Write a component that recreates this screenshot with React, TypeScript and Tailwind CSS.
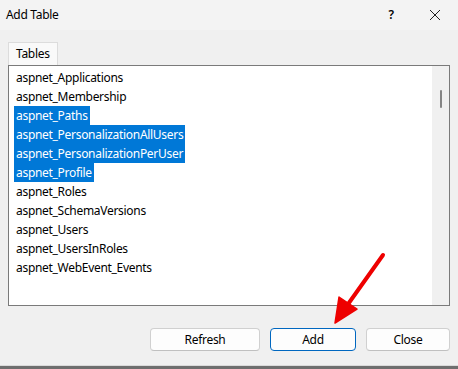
const tables = [
  "aspnet_Applications",
  "aspnet_Membership",
  "aspnet_Paths",
  "aspnet_PersonalizationAllUsers",
  "aspnet_PersonalizationPerUser",
  "aspnet_Profile",
  "aspnet_Roles",
  "aspnet_SchemaVersions",
  "aspnet_Users",
  "aspnet_UsersInRoles",
  "aspnet_WebEvent_Events",
];

const selected = new Set(["aspnet_Paths", "aspnet_PersonalizationAllUsers", "aspnet_PersonalizationPerUser", "aspnet_Profile"]);

export default function App() {
  return (
    <div
      className="relative w-[458px] h-[369px] overflow-hidden bg-[#f0f0f0] text-[#000] text-[12px] tracking-[-0.3px]"
      style={{ fontFamily: '"Segoe UI", "Noto Sans", "Open Sans", sans-serif' }}
    >
      {/* title bar */}
      <div className="h-[30px] flex items-center justify-between bg-[#f3f3f3] pl-[6px]">
        <span className="text-[12px] leading-none">Add Table</span>
        <div className="flex items-center h-full">
          <span className="w-[46px] pl-[4px] text-center text-[12px] font-semibold leading-none">?</span>
          <span className="w-[46px] flex justify-center">
            <svg width="12" height="12" viewBox="0 0 12 12" fill="none" stroke="#222" strokeWidth="1">
              <path d="M1 1L11 11M11 1L1 11" />
            </svg>
          </span>
        </div>
      </div>

      <div className="px-[8px] pt-[12px]">
        {/* tab */}
        <div className="w-[50px] h-[23px] flex items-center pl-[7px] bg-[#f9f9f9] border border-b-0 border-[#dcdcdc]">
          Tables
        </div>

        {/* list */}
        <div className="flex w-[442px] h-[241px] bg-white border border-[#7a7a7a]">
          <div className="flex-1 pt-[2px] pl-[5px]">
            {tables.map((t) => (
              <div key={t} className="h-[19px] flex">
                <span
                  className={
                    selected.has(t)
                      ? "px-[2px] h-full flex items-center bg-[#0078d7] text-white"
                      : "px-[2px] h-full flex items-center"
                  }
                >
                  {t}
                </span>
              </div>
            ))}
          </div>
          <div className="w-[17px] h-full bg-[#f0f0f0] flex justify-center pt-[24px]">
            <div className="w-[2px] h-[18px] bg-[#858585] rounded-full" />
          </div>
        </div>

        {/* buttons */}
        <div className="flex justify-end gap-[10px] mt-[22px]">
          <button className="w-[110px] h-[23px] bg-[#fdfdfd] border border-[#d0d0d0] border-b-[#c0c0c0] rounded-[4px]">
            Refresh
          </button>
          <button className="w-[86px] h-[23px] bg-[#fdfdfd] border border-[#0067c0] rounded-[4px]">
            Add
          </button>
          <button className="w-[84px] h-[23px] bg-[#fdfdfd] border border-[#d0d0d0] border-b-[#c0c0c0] rounded-[4px]">
            Close
          </button>
        </div>
      </div>

      {/* bottom edge */}
      <div className="absolute left-0 right-0 bottom-0 h-[4px] bg-[#6e6e6e] border-t border-[#dadada]" />

      {/* red annotation arrow */}
      <svg className="absolute left-0 top-0" width="458" height="369" viewBox="0 0 458 369">
        <path d="M383 255L346 307" stroke="#ee0000" strokeWidth="4" strokeLinecap="round" />
        <path d="M335 323L339 297L357 309Z" fill="#ee0000" stroke="#ee0000" strokeWidth="1.5" strokeLinejoin="round" />
      </svg>
    </div>
  );
}
